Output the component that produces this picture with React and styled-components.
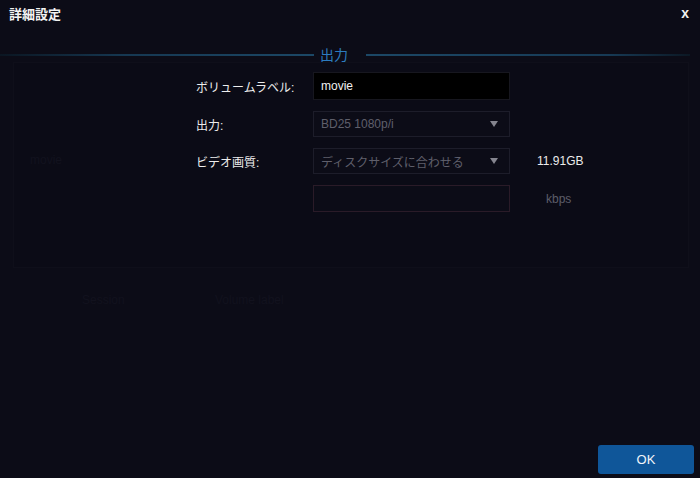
import React from "react";
import styled, { createGlobalStyle } from "styled-components";

const GlobalStyle = createGlobalStyle`
  html, body {
    margin: 0;
    padding: 0;
    background: #0c0c17;
  }
  #root {
    height: 478px;
  }
  * {
    box-sizing: border-box;
  }
`;

const jp = `"Liberation Sans", "Noto Sans CJK JP", sans-serif`;

const Dialog = styled.div`
  position: relative;
  width: 700px;
  height: 478px;
  background: #0c0c17;
  display: flex;
  flex-direction: column;
  font-family: ${jp};
  overflow: hidden;
`;

/* faint app content seen through the modal backdrop */
const Ghost = styled.div`
  position: absolute;
  inset: 0;
  pointer-events: none;
`;

const GhostPanel = styled.div`
  position: absolute;
  left: 13px;
  top: 62px;
  width: 676px;
  height: 206px;
  border: 1px solid #0f0f1a;
  background: #0b0b16;
`;

const GhostText = styled.span`
  position: absolute;
  left: ${(p) => p.x}px;
  top: ${(p) => p.y}px;
  font-size: 12px;
  color: #12121e;
`;

const TitleBar = styled.div`
  position: relative;
  height: 26px;
  padding: 0 9px;
  display: flex;
  align-items: center;
  justify-content: space-between;
`;

const Title = styled.span`
  font-size: 13px;
  font-weight: bold;
  color: #f2f2f2;
`;

const Close = styled.span`
  font-family: "Liberation Sans", sans-serif;
  font-size: 14px;
  font-weight: bold;
  color: #f2f2f2;
  margin-right: 2px;
`;

const SectionHeader = styled.div`
  position: relative;
  margin-top: 19px;
  height: 20px;
  display: flex;
  align-items: center;
  gap: 4px;
`;

const Line = styled.div`
  height: 2px;
  flex: ${(p) => (p.$grow ? 1 : "none")};
  width: ${(p) => (p.$w ? `${p.$w}px` : "auto")};
  background: ${(p) =>
    p.$left
      ? "linear-gradient(90deg, #0b1622 0%, #163852 40%, #1c4866 100%)"
      : "linear-gradient(90deg, #1c4866 0%, #173a55 75%, #0c1824 100%)"};
  margin-right: ${(p) => (p.$left ? 0 : 10)}px;
`;

const SectionTitle = styled.span`
  font-size: 14px;
  color: #2c7cbf;
  padding: 0 14px 0 2px;
  line-height: 20px;
`;

const Form = styled.div`
  position: relative;
  margin: 7px 0 0 196px;
  display: grid;
  grid-template-columns: 117px 197px auto;
  row-gap: 11px;
  align-items: center;
`;

const Label = styled.span`
  font-size: 12px;
  color: #ededed;
`;

const Field = styled.div`
  height: ${(p) => p.$h || 26}px;
  display: flex;
  align-items: center;
  justify-content: space-between;
  padding: 0 9px 0 7px;
  font-size: 12px;
  font-family: "Liberation Sans", "Noto Sans CJK JP", sans-serif;
  background: ${(p) => (p.$dark ? "#000000" : "#0c0c17")};
  border: 1px solid ${(p) => p.$border || "#1d1d2a"};
  color: ${(p) => (p.$dark ? "#f0f0f0" : "#5f5f6b")};
`;

const Arrow = styled.span`
  width: 0;
  height: 0;
  border-left: 4px solid transparent;
  border-right: 4px solid transparent;
  border-top: 6px solid #85858f;
  margin-right: 2px;
`;

const Extra = styled.span`
  font-family: "Liberation Sans", sans-serif;
  font-size: 12px;
  padding-left: ${(p) => p.$pl || 27}px;
  color: ${(p) => (p.$muted ? "#5d5d69" : "#ececec")};
`;

const Spacer = styled.div`
  flex: 1;
`;

const Footer = styled.div`
  position: relative;
  display: flex;
  justify-content: flex-end;
  padding: 0 6px 4px 0;
`;

const OkButton = styled.button`
  width: 96px;
  height: 29px;
  border: none;
  border-radius: 3px;
  background: #0f5699;
  color: #f2f5fa;
  font-family: "Liberation Sans", sans-serif;
  font-size: 13px;
  cursor: pointer;
`;

const App = () => {
  return (
    <>
      <GlobalStyle />
      <Dialog>
        <Ghost>
          <GhostPanel />
          <GhostText x={30} y={153}>movie</GhostText>
          <GhostText x={82} y={293}>Session</GhostText>
          <GhostText x={215} y={293}>Volume label</GhostText>
        </Ghost>

        <TitleBar>
          <Title>詳細設定</Title>
          <Close>x</Close>
        </TitleBar>

        <SectionHeader>
          <Line $left $w={314} />
          <SectionTitle>出力</SectionTitle>
          <Line $grow />
        </SectionHeader>

        <Form>
          <Label>ボリュームラベル:</Label>
          <Field $dark $h={28} $border="#17171f">movie</Field>
          <span />

          <Label>出力:</Label>
          <Field>
            BD25 1080p/i
            <Arrow />
          </Field>
          <span />

          <Label>ビデオ画質:</Label>
          <Field>
            ディスクサイズに合わせる
            <Arrow />
          </Field>
          <Extra>11.91GB</Extra>

          <span />
          <Field $h={27} $border="#2a1b28" />
          <Extra $muted $pl={36}>kbps</Extra>
        </Form>

        <Spacer />

        <Footer>
          <OkButton>OK</OkButton>
        </Footer>
      </Dialog>
    </>
  );
};

export default App;
